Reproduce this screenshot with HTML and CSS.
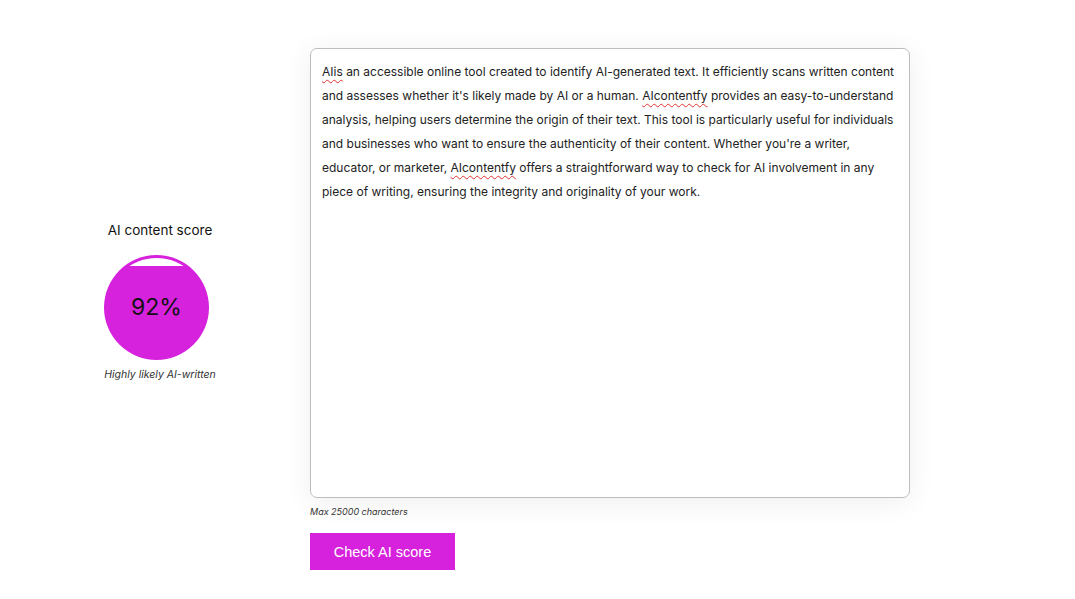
FILE: index.html
```html
<!DOCTYPE html>
<html lang="en">
<head>
  <meta charset="UTF-8">
  <meta name="viewport" content="width=device-width, initial-scale=1.0">
  <title>AI Content Detector</title>
  <link rel="stylesheet" href="styles.css">
</head>
<body>
  <div class="page">
    <div class="score-panel">
      <div class="score-title">AI content score</div>
      <div class="score-ring">
        <svg width="105" height="105" viewBox="0 0 105 105">
          <defs>
            <clipPath id="inner">
              <circle cx="52.5" cy="52.5" r="49.5" />
            </clipPath>
          </defs>
          <circle cx="52.5" cy="52.5" r="52.5" fill="#d622dc" />
          <!-- empty part of the gauge: 8% of the inner height -->
          <rect x="0" y="3" width="105" height="8" fill="#fff" clip-path="url(#inner)" />
        </svg>
        <span class="score-value">92%</span>
      </div>
      <div class="score-label">Highly likely AI-written</div>
    </div>

    <div class="checker">
      <div class="text-box" contenteditable="true" spellcheck="false"><span class="typo">AIis</span> an accessible online tool created to identify AI-generated text. It efficiently scans written content and assesses whether it's likely made by AI or a human. <span class="typo">AIcontentfy</span> provides an easy-to-understand analysis, helping users determine the origin of their text. This tool is particularly useful for individuals and businesses who want to ensure the authenticity of their content. Whether you're a writer, educator, or marketer, <span class="typo">AIcontentfy</span> offers a straightforward way to check for AI involvement in any piece of writing, ensuring the integrity and originality of your work.</div>
      <div class="hint">Max 25000 characters</div>
      <button type="button" class="check-btn">Check AI score</button>
    </div>
  </div>
</body>
</html>
```

FILE: styles.css
```css
body {
  margin: 0;
  font-family: Inter, "Liberation Sans", Arial, sans-serif;
  background: #fff;
  color: #222;
}

.page {
  display: flex;
  align-items: center;
  padding: 48px 0 0 60px;
  gap: 50px;
}

.score-panel {
  width: 200px;
  padding-bottom: 16px;
  display: flex;
  flex-direction: column;
  align-items: center;
}

.score-title {
  font-size: 13.5px;
  color: #111;
  margin-bottom: 17px;
}

.score-ring {
  position: relative;
  width: 105px;
  height: 105px;
  margin-right: 7px;
}

.score-ring svg {
  display: block;
}

.score-value {
  position: absolute;
  inset: 0;
  display: flex;
  align-items: center;
  justify-content: center;
  font-size: 23px;
  color: #111;
}

.score-label {
  margin-top: 8px;
  font-size: 10.5px;
  font-style: italic;
  color: #333;
}

.checker {
  display: flex;
  flex-direction: column;
  align-items: flex-start;
}

.text-box {
  width: 600px;
  height: 450px;
  box-sizing: border-box;
  padding: 11px 11px;
  border: 1px solid #bdbdbd;
  border-radius: 7px;
  box-shadow: 0 4px 28px rgba(0, 0, 0, 0.07);
  font-size: 12px;
  line-height: 24px;
  color: #222;
  outline: none;
}

.typo {
  text-decoration: underline wavy #e0332f;
  text-decoration-thickness: 1px;
  text-underline-offset: 3px;
}

.hint {
  margin-top: 8px;
  font-size: 9px;
  font-style: italic;
  color: #333;
}

.check-btn {
  margin-top: 16px;
  width: 145px;
  height: 37px;
  border: none;
  background: #d622dc;
  color: #fff;
  font-family: "Liberation Sans", Arial, sans-serif;
  font-size: 14.5px;
  cursor: pointer;
}
```
